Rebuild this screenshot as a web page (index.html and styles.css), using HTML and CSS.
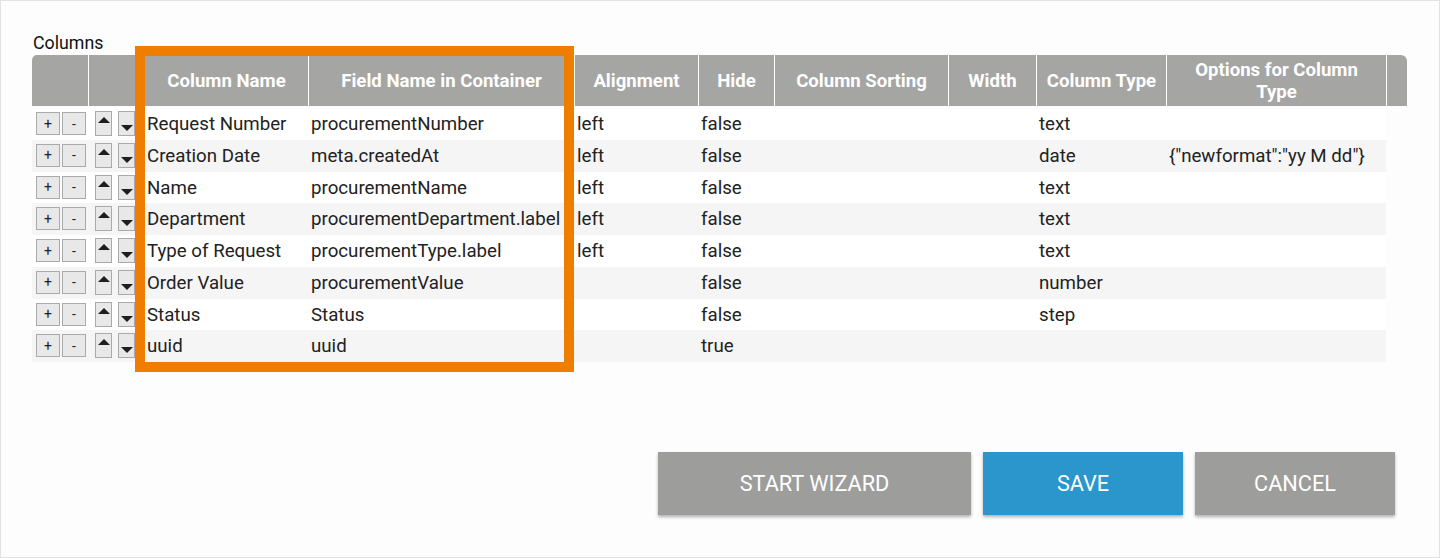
FILE: index.html
```html
<!DOCTYPE html>
<html lang="en">

<head>
    <meta charset="UTF-8">
    <meta name="viewport" content="width=device-width, initial-scale=1.0">
    <title>Table Settings</title>
    <link rel="stylesheet" href="styles.css">
</head>

<body>

    <div class="page">

        <!-- Column definitions -->
        <section class="columns-editor">
            <div class="section-label">Columns</div>

            <div class="grid-head">
                <div class="th"></div>
                <div class="th"></div>
                <div class="th">Column Name</div>
                <div class="th">Field Name in Container</div>
                <div class="th">Alignment</div>
                <div class="th">Hide</div>
                <div class="th">Column Sorting</div>
                <div class="th">Width</div>
                <div class="th">Column Type</div>
                <div class="th wrap">Options for Column Type</div>
                <div class="th"></div>
            </div>

            <div class="grid-body">
                <div class="row">
                    <div class="td ctrl"><button class="sq">+</button><button class="sq">-</button></div>
                    <div class="td ctrl move"><button class="mv up"><span class="caret-up"></span></button><button class="mv down"><span class="caret-down"></span></button></div>
                    <div class="td">Request Number</div>
                    <div class="td">procurementNumber</div>
                    <div class="td">left</div>
                    <div class="td">false</div>
                    <div class="td"></div>
                    <div class="td"></div>
                    <div class="td">text</div>
                    <div class="td"></div>
                </div>
                <div class="row">
                    <div class="td ctrl"><button class="sq">+</button><button class="sq">-</button></div>
                    <div class="td ctrl move"><button class="mv up"><span class="caret-up"></span></button><button class="mv down"><span class="caret-down"></span></button></div>
                    <div class="td">Creation Date</div>
                    <div class="td">meta.createdAt</div>
                    <div class="td">left</div>
                    <div class="td">false</div>
                    <div class="td"></div>
                    <div class="td"></div>
                    <div class="td">date</div>
                    <div class="td">{"newformat":"yy M dd"}</div>
                </div>
                <div class="row">
                    <div class="td ctrl"><button class="sq">+</button><button class="sq">-</button></div>
                    <div class="td ctrl move"><button class="mv up"><span class="caret-up"></span></button><button class="mv down"><span class="caret-down"></span></button></div>
                    <div class="td">Name</div>
                    <div class="td">procurementName</div>
                    <div class="td">left</div>
                    <div class="td">false</div>
                    <div class="td"></div>
                    <div class="td"></div>
                    <div class="td">text</div>
                    <div class="td"></div>
                </div>
                <div class="row">
                    <div class="td ctrl"><button class="sq">+</button><button class="sq">-</button></div>
                    <div class="td ctrl move"><button class="mv up"><span class="caret-up"></span></button><button class="mv down"><span class="caret-down"></span></button></div>
                    <div class="td">Department</div>
                    <div class="td">procurementDepartment.label</div>
                    <div class="td">left</div>
                    <div class="td">false</div>
                    <div class="td"></div>
                    <div class="td"></div>
                    <div class="td">text</div>
                    <div class="td"></div>
                </div>
                <div class="row">
                    <div class="td ctrl"><button class="sq">+</button><button class="sq">-</button></div>
                    <div class="td ctrl move"><button class="mv up"><span class="caret-up"></span></button><button class="mv down"><span class="caret-down"></span></button></div>
                    <div class="td">Type of Request</div>
                    <div class="td">procurementType.label</div>
                    <div class="td">left</div>
                    <div class="td">false</div>
                    <div class="td"></div>
                    <div class="td"></div>
                    <div class="td">text</div>
                    <div class="td"></div>
                </div>
                <div class="row">
                    <div class="td ctrl"><button class="sq">+</button><button class="sq">-</button></div>
                    <div class="td ctrl move"><button class="mv up"><span class="caret-up"></span></button><button class="mv down"><span class="caret-down"></span></button></div>
                    <div class="td">Order Value</div>
                    <div class="td">procurementValue</div>
                    <div class="td"></div>
                    <div class="td">false</div>
                    <div class="td"></div>
                    <div class="td"></div>
                    <div class="td">number</div>
                    <div class="td"></div>
                </div>
                <div class="row">
                    <div class="td ctrl"><button class="sq">+</button><button class="sq">-</button></div>
                    <div class="td ctrl move"><button class="mv up"><span class="caret-up"></span></button><button class="mv down"><span class="caret-down"></span></button></div>
                    <div class="td">Status</div>
                    <div class="td">Status</div>
                    <div class="td"></div>
                    <div class="td">false</div>
                    <div class="td"></div>
                    <div class="td"></div>
                    <div class="td">step</div>
                    <div class="td"></div>
                </div>
                <div class="row">
                    <div class="td ctrl"><button class="sq">+</button><button class="sq">-</button></div>
                    <div class="td ctrl move"><button class="mv up"><span class="caret-up"></span></button><button class="mv down"><span class="caret-down"></span></button></div>
                    <div class="td">uuid</div>
                    <div class="td">uuid</div>
                    <div class="td"></div>
                    <div class="td">true</div>
                    <div class="td"></div>
                    <div class="td"></div>
                    <div class="td"></div>
                    <div class="td"></div>
                </div>
            </div>
        </section>

        <!-- Highlight frame around the name columns -->
        <div class="highlight"></div>

        <!-- Actions -->
        <div class="actions">
            <button class="action">START WIZARD</button>
            <button class="action primary">SAVE</button>
            <button class="action">CANCEL</button>
        </div>

    </div>

</body>

</html>
```

FILE: styles.css
```css
body {
    margin: 0;
    padding: 0;
    font-family: Roboto, 'Liberation Sans', sans-serif;
    color: #222;
    background: #fdfdfd;
}

.page {
    position: relative;
    width: 1440px;
    height: 558px;
    box-sizing: border-box;
    border: 1px solid #e2e2e2;
    background: #fdfdfd;
    overflow: hidden;
}

.columns-editor {
    margin-left: 31px;
    padding-top: 32px;
}

.section-label {
    font-size: 17.8px;
    line-height: 20px;
    color: #111;
    margin-left: 1px;
    margin-bottom: 2px;
}

/* shared column layout for header and rows */
.grid-head,
.row {
    display: grid;
    grid-template-columns: 56px 56px 164px 266px 124px 76px 174px 88px 130px 220px;
}

.grid-head {
    grid-template-columns: 56px 56px 164px 266px 124px 76px 174px 88px 130px 220px 21px;
    width: 1375px;
    height: 51px;
    background: #a5a5a4;
    border-radius: 5px 6px 0 0;
    overflow: hidden;
}

.th {
    display: flex;
    align-items: center;
    justify-content: center;
    text-align: center;
    color: #fff;
    font-weight: 700;
    font-size: 18.6px;
    line-height: 22px;
    padding: 0 2px;
    white-space: nowrap;
    border-left: 1px solid #fff;
}

.th.wrap {
    white-space: normal;
    padding: 0 20px;
}

.th:first-child {
    border-left: none;
}

.grid-body {
    width: 1354px;
    margin-top: 2px;
}

.row {
    height: 31.75px;
    background: #fff;
}

.row:nth-child(even) {
    background: #f5f5f5;
}

.td {
    font-size: 18.7px;
    line-height: 29.75px;
    padding: 2px 0 0 3px;
    white-space: nowrap;
}

.ctrl {
    display: flex;
    align-items: flex-start;
    padding: 0 0 0 4px;
    gap: 2px;
}

.sq {
    margin-top: 4px;
    width: 24px;
    height: 23px;
    padding: 0;
    border: 1px solid #aaa;
    background: #e8e8e8;
    color: #222;
    font-family: inherit;
    font-size: 14px;
    line-height: 20px;
}

.move {
    padding-left: 7px;
    gap: 6px;
}

.mv {
    margin-top: 3px;
    width: 17px;
    height: 25px;
    padding: 0;
    border: 1px solid #aaa;
    background: #e8e8e8;
    display: flex;
    justify-content: center;
    align-items: flex-start;
}

.mv.up {
    padding-top: 5px;
}

.mv.down {
    padding-top: 13px;
}

.caret-up {
    width: 0;
    height: 0;
    border-left: 6px solid transparent;
    border-right: 6px solid transparent;
    border-bottom: 6px solid #1e1e1e;
}

.caret-down {
    width: 0;
    height: 0;
    border-left: 6px solid transparent;
    border-right: 6px solid transparent;
    border-top: 6px solid #1e1e1e;
}

.highlight {
    position: absolute;
    left: 134px;
    top: 45px;
    width: 439px;
    height: 326px;
    box-sizing: border-box;
    border: 10px solid #ef7d00;
    pointer-events: none;
}

.actions {
    display: flex;
    justify-content: flex-end;
    gap: 12px;
    margin-top: 90px;
    padding-right: 44px;
}

.action {
    height: 63px;
    width: 200px;
    border: none;
    background: #9d9d9b;
    color: #fff;
    font-family: inherit;
    font-size: 21.7px;
    box-shadow: 0 2px 3px rgba(0, 0, 0, 0.3);
    cursor: pointer;
}

.action:first-child {
    width: 313px;
}

.action.primary {
    background: #2b96cc;
}
```
